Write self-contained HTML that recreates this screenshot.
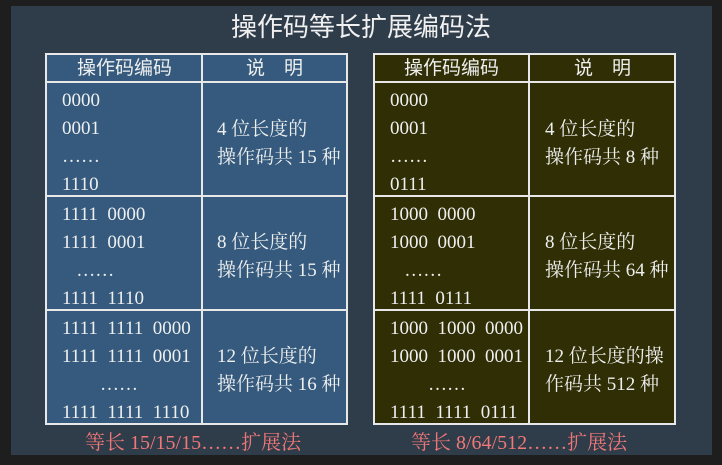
<!DOCTYPE html><html><head><meta charset="utf-8"><style>
body{margin:0;width:722px;height:465px;background:#1e1e1e;position:relative;overflow:hidden;font-family:"Liberation Serif","Noto Serif CJK SC",serif;}
.bg{position:absolute;left:11px;top:6px;width:701px;height:449px;background:#2f3c4a;}
.t{position:absolute;white-space:pre;color:#eef0f0;font-size:19px;line-height:20px;}
.title{position:absolute;left:0;width:722px;top:7px;text-align:center;color:#f0f0f0;font-size:26px;font-family:"Liberation Sans","Noto Sans CJK SC",sans-serif;}
.tb{position:absolute;border:2px solid #e8e8e8;box-sizing:border-box;}
.h{position:absolute;background:#e8e8e8;height:2px}
.v{position:absolute;background:#e8e8e8;width:2px}
.cap{position:absolute;color:#f07878;font-size:20px;white-space:pre}
.s{font-family:'Liberation Sans','Noto Sans CJK SC',sans-serif;font-size:19px}
</style></head><body>
<div class="bg"></div>
<div class="title">操作码等长扩展编码法</div>
<div class="tb" style="left:45px;top:53px;width:303px;height:372px;background:#365a7d"></div>
<div class="tb" style="left:373px;top:53px;width:303px;height:372px;background:#302e05"></div>
<div class="h" style="left:45px;width:303px;top:81px"></div><div class="h" style="left:45px;width:303px;top:195px"></div><div class="h" style="left:45px;width:303px;top:309px"></div>
<div class="h" style="left:373px;width:303px;top:81px"></div><div class="h" style="left:373px;width:303px;top:195px"></div><div class="h" style="left:373px;width:303px;top:309px"></div>
<div class="v" style="left:201px;top:53px;height:372px"></div><div class="v" style="left:528px;top:53px;height:372px"></div>
<div class="t s" style="left:77px;top:59px">操作码编码</div>
<div class="t s" style="left:246px;top:59px">说　明</div>
<div class="t s" style="left:404px;top:59px">操作码编码</div>
<div class="t s" style="left:574px;top:59px">说　明</div>

<div class="t" style="left:62px;top:87px;line-height:28px">0000
0001
……
1110</div>
<div class="t" style="left:217px;top:116px;line-height:28px">4 位长度的
操作码共 15 种</div>
<div class="t" style="left:62px;top:201px;line-height:28px">1111  0000
1111  0001
   ……
1111  1110</div>
<div class="t" style="left:217px;top:229px;line-height:28px">8 位长度的
操作码共 15 种</div>
<div class="t" style="left:62px;top:315px;line-height:28px">1111  1111  0000
1111  1111  0001
        ……
1111  1111  1110</div>
<div class="t" style="left:217px;top:343px;line-height:28px">12 位长度的
操作码共 16 种</div>

<div class="t" style="left:390px;top:87px;line-height:28px">0000
0001
……
0111</div>
<div class="t" style="left:545px;top:116px;line-height:28px">4 位长度的
操作码共 8 种</div>
<div class="t" style="left:390px;top:201px;line-height:28px">1000  0000
1000  0001
   ……
1111  0111</div>
<div class="t" style="left:545px;top:229px;line-height:28px">8 位长度的
操作码共 64 种</div>
<div class="t" style="left:390px;top:315px;line-height:28px">1000  1000  0000
1000  1000  0001
        ……
1111  1111  0111</div>
<div class="t" style="left:545px;top:343px;line-height:28px">12 位长度的操
作码共 512 种</div>

<div class="cap" style="left:85px;top:426px">等长 15/15/15……扩展法</div>
<div class="cap" style="left:411px;top:426px">等长 8/64/512……扩展法</div>
</body></html>
